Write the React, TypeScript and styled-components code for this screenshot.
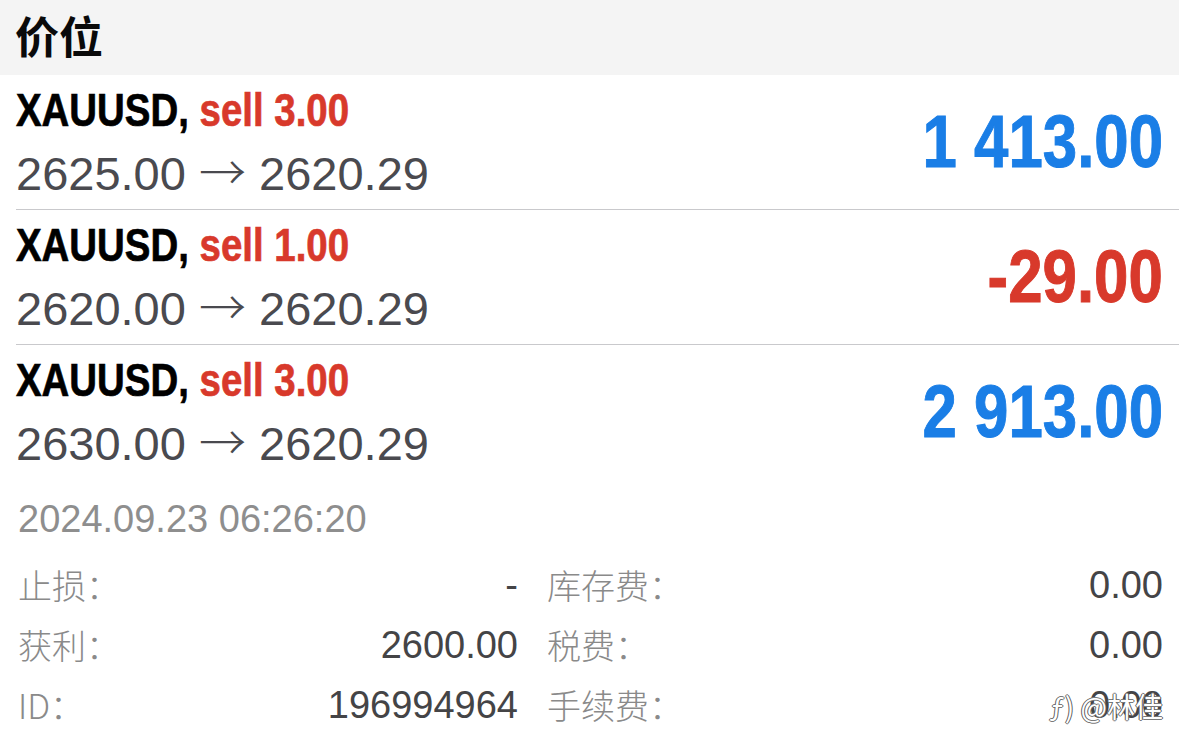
import React from "react";
import styled, { createGlobalStyle } from "styled-components";

const GlobalStyle = createGlobalStyle`
  html, body {
    margin: 0;
    padding: 0;
    background: #ffffff;
  }
  body {
    font-family: "Liberation Sans", "Noto Sans CJK SC", sans-serif;
    -webkit-font-smoothing: antialiased;
  }
`;

const Page = styled.div`
  width: 1179px;
  height: 751px;
  overflow: hidden;
  background: #ffffff;
`;

const Header = styled.div`
  height: 75px;
  box-sizing: border-box;
  padding: 0 0 6px 15px;
  display: flex;
  align-items: center;
  background: #f4f4f4;
  font-family: "Noto Sans CJK SC", sans-serif;
  font-size: 44px;
  font-weight: 700;
  color: #0a0a0a;
`;

const PositionRow = styled.div<{ $last?: boolean }>`
  height: 134px;
  margin-left: 16px;
  padding-right: 16px;
  display: flex;
  align-items: center;
  justify-content: space-between;
  border-bottom: ${(p) => (p.$last ? "none" : "1px solid #c9c9cc")};
`;

const Info = styled.div`
  display: flex;
  flex-direction: column;
`;

/* no condensed face is installed, so the bold condensed look is squeezed */
const Title = styled.div`
  font-family: "Liberation Sans", sans-serif;
  font-weight: 700;
  font-size: 46px;
  line-height: 60px;
  color: #000000;
  white-space: nowrap;
  -webkit-text-stroke: 0.7px currentColor;
  transform: scaleX(0.835);
  transform-origin: left center;
`;

const Side = styled.span`
  color: #d8392b;
`;

const Prices = styled.div`
  font-family: "Liberation Sans", sans-serif;
  font-size: 47px;
  line-height: 60px;
  color: #4a4a4f;
  white-space: nowrap;
`;

const Arrow = styled.span`
  font-family: "Noto Sans CJK SC", sans-serif;
  font-weight: 300;
`;

const Profit = styled.div<{ $loss?: boolean }>`
  font-family: "Liberation Sans", sans-serif;
  font-weight: 700;
  font-size: 74px;
  line-height: 80px;
  color: ${(p) => (p.$loss ? "#d8392b" : "#1a7ee6")};
  white-space: nowrap;
  -webkit-text-stroke: 1px currentColor;
  transform: scaleX(0.835);
  transform-origin: right center;
`;

const DateLine = styled.div`
  padding: 20px 0 0 18px;
  font-size: 38px;
  line-height: 40px;
  color: #8e8e8e;
`;

const Details = styled.div`
  margin-top: 16px;
  padding: 0 16px 0 18px;
  display: grid;
  grid-template-columns: 500px 1fr;
  column-gap: 29px;
`;

const Field = styled.div`
  position: relative;
  height: 60px;
  display: flex;
  align-items: center;
  justify-content: space-between;
`;

const Label = styled.span`
  font-family: "Noto Sans CJK SC", sans-serif;
  font-size: 34px;
  font-weight: 300;
  color: #8a8a8a;
  line-height: 60px;
`;

const Value = styled.span`
  font-family: "Liberation Sans", sans-serif;
  font-size: 38px;
  color: #444446;
  line-height: 60px;
`;

const Watermark = styled.span`
  position: absolute;
  right: 0;
  top: 50%;
  transform: translateY(-48%);
  font-family: "Noto Sans CJK SC", sans-serif;
  font-size: 28px;
  color: #ffffff;
  text-shadow: -1px 0 #5e5e5e, 1px 0 #5e5e5e, 0 1px #7a7a7a, 0 -1px #7a7a7a;
  white-space: nowrap;
`;

type Position = {
  symbol: string;
  side: string;
  volume: string;
  open: string;
  current: string;
  profit: string;
};

const positions: Position[] = [
  { symbol: "XAUUSD", side: "sell", volume: "3.00", open: "2625.00", current: "2620.29", profit: "1 413.00" },
  { symbol: "XAUUSD", side: "sell", volume: "1.00", open: "2620.00", current: "2620.29", profit: "-29.00" },
  { symbol: "XAUUSD", side: "sell", volume: "3.00", open: "2630.00", current: "2620.29", profit: "2 913.00" },
];

const fields = [
  ["止损：", "-", "库存费：", "0.00"],
  ["获利：", "2600.00", "税费：", "0.00"],
  ["ID：", "196994964", "手续费：", "0.00"],
];

export default function App() {
  return (
    <Page>
      <GlobalStyle />
      <Header>价位</Header>
      {positions.map((p, i) => (
        <PositionRow key={i} $last={i === positions.length - 1}>
          <Info>
            <Title>
              {p.symbol}, <Side>{p.side} {p.volume}</Side>
            </Title>
            <Prices>
              {p.open} <Arrow>→</Arrow> {p.current}
            </Prices>
          </Info>
          <Profit $loss={p.profit.startsWith("-")}>{p.profit}</Profit>
        </PositionRow>
      ))}
      <DateLine>2024.09.23 06:26:20</DateLine>
      <Details>
        {fields.map((f, i) => (
          <React.Fragment key={i}>
            <Field>
              <Label>{f[0]}</Label>
              <Value>{f[1]}</Value>
            </Field>
            <Field>
              <Label>{f[2]}</Label>
              <Value>{f[3]}</Value>
              {i === fields.length - 1 && <Watermark>ƒ) @林佳</Watermark>}
            </Field>
          </React.Fragment>
        ))}
      </Details>
    </Page>
  );
}
